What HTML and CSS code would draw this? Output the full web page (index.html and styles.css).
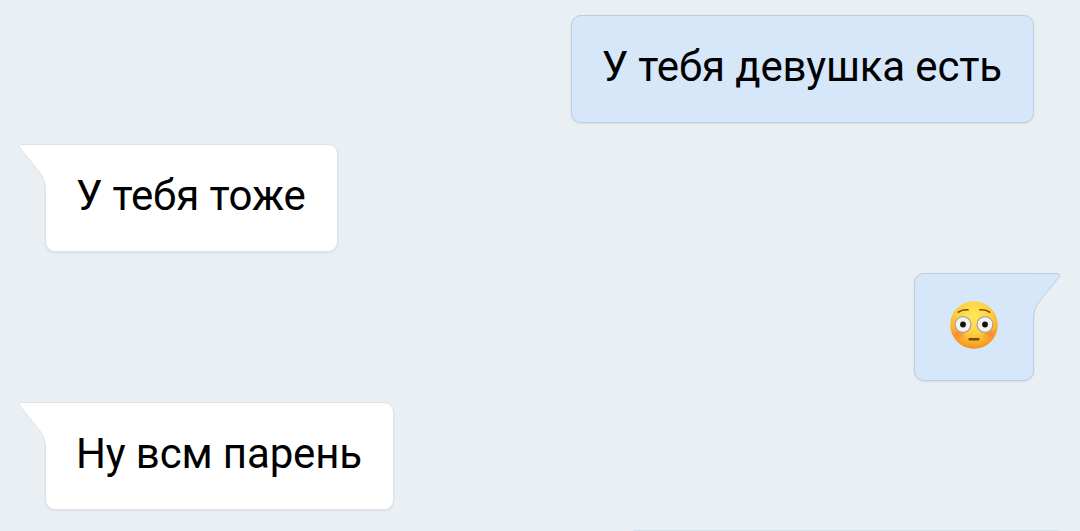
FILE: index.html
```html
<!doctype html>
<html lang="ru">
  <head>
    <meta charset="UTF-8" />
    <meta name="viewport" content="width=device-width, initial-scale=1.0" />
    <title>Сообщения</title>
    <link rel="stylesheet" href="styles.css">
  </head>
  <body>
    <main class="chat">
      <div class="message message-out">
        <span class="message-text">У тебя девушка есть</span>
      </div>

      <div class="message message-in with-tail">
        <svg class="tail" width="30" height="48" viewBox="0 0 30 48">
          <path class="tail-fill" d="M30 .5H3Q.5 1 1.5 3.5L22 29Q27.500 36 27.500 46V48H30Z" />
          <path class="tail-line" d="M30 .5H3Q.5 1 1.5 3.5L22 29Q27.500 36 27.500 46V48" />
        </svg>
        <span class="message-text">У тебя тоже</span>
      </div>

      <div class="message message-out with-tail">
        <svg class="tail" width="30" height="48" viewBox="0 0 30 48">
          <path class="tail-fill" d="M0 .5H27Q29.500 1 28.500 3.500L8 29Q2.500 36 2.500 46V48H0Z" />
          <path class="tail-line" d="M0 .5H27Q29.500 1 28.500 3.500L8 29Q2.500 36 2.500 46V48" />
        </svg>
        <svg class="emoji" width="48" height="48" viewBox="0 0 48 48" role="img" aria-label="Flushed face">
          <defs>
            <radialGradient id="face" cx="50%" cy="32%" r="68%">
              <stop offset="0" stop-color="#ffe85c" />
              <stop offset=".5" stop-color="#fed33e" />
              <stop offset=".85" stop-color="#f9a928" />
              <stop offset="1" stop-color="#ee8e22" />
            </radialGradient>
            <radialGradient id="blush">
              <stop offset="0" stop-color="#ff6b32" stop-opacity=".7" />
              <stop offset="1" stop-color="#ff7a32" stop-opacity="0" />
            </radialGradient>
            <clipPath id="face-clip">
              <circle cx="24" cy="24" r="23.800" />
            </clipPath>
          </defs>
          <circle cx="24" cy="24" r="23.800" fill="url(#face)" />
          <g clip-path="url(#face-clip)">
            <ellipse cx="8" cy="33" rx="9" ry="7" fill="url(#blush)" />
            <ellipse cx="40" cy="33" rx="9" ry="7" fill="url(#blush)" />
          </g>
          <g fill="#f5f4f0" stroke="#aaa398" stroke-width="1.300">
            <circle cx="13" cy="23.500" r="7.900" />
            <circle cx="35" cy="23.500" r="7.900" />
          </g>
          <g fill="#151311">
            <circle cx="13" cy="23.500" r="2.900" />
            <circle cx="35" cy="23.500" r="2.900" />
          </g>
          <g fill="none" stroke="#7a4710" stroke-width="1.600" stroke-linecap="round">
            <path d="M8.500 11.200Q12 8.200 18 8.800" />
            <path d="M30 8.800Q36 8.200 39.500 11.200" />
          </g>
          <rect x="18.500" y="37" width="11" height="2.600" rx="1" fill="#7a4710" />
        </svg>
      </div>

      <div class="message message-in with-tail">
        <svg class="tail" width="30" height="48" viewBox="0 0 30 48">
          <path class="tail-fill" d="M30 .5H3Q.5 1 1.5 3.5L22 29Q27.500 36 27.500 46V48H30Z" />
          <path class="tail-line" d="M30 .5H3Q.5 1 1.5 3.5L22 29Q27.500 36 27.500 46V48" />
        </svg>
        <span class="message-text">Ну всм парень</span>
      </div>

      <div class="message message-out message-next"></div>
    </main>
  </body>
</html>
```

FILE: styles.css
```css
* {
  box-sizing: border-box;
}
body {
  margin: 0;
  background: #eaeff3;
  color: #000;
  font-family: Roboto, "Noto Sans", sans-serif;
}
.chat {
  display: flex;
  flex-direction: column;
  gap: 21px;
  height: 531px;
  padding: 15px 46px 0 45px;
  overflow: hidden;
}
.message {
  position: relative;
  flex: none;
  height: 108px;
  padding: 26px 31px 0 30px;
  border: 1px solid;
  border-radius: 10px;
  box-shadow: 0 1px 2px rgba(80, 110, 140, 0.12);
}
.message-in {
  align-self: flex-start;
  background: #fff;
  border-color: #dce2e8;
}
.message-out {
  align-self: flex-end;
  background: #d6e7f9;
  border-color: #bccde1;
}
.message-in.with-tail {
  border-top-left-radius: 0;
}
.message-out.with-tail {
  border-top-right-radius: 0;
}
.message-text {
  display: block;
  font-size: 42px;
  line-height: 49px;
  letter-spacing: -0.14px;
  white-space: nowrap;
}
.tail {
  position: absolute;
  top: -1px;
}
.message-in .tail {
  left: -28px;
}
.message-out .tail {
  right: -28px;
}
.tail-fill {
  fill: #fff;
}
.message-out .tail-fill {
  fill: #d6e7f9;
}
.tail-line {
  fill: none;
  stroke: #dce2e8;
}
.message-out .tail-line {
  stroke: #bccde1;
}
.emoji {
  display: block;
  margin: 1px 4px 0 5px;
}
/* next bubble, only its top edge is in view */
.message-next {
  width: 432px;
  margin: -1px -28px 0 0;
  border-color: #d3dfec;
  border-radius: 6px;
}
```
